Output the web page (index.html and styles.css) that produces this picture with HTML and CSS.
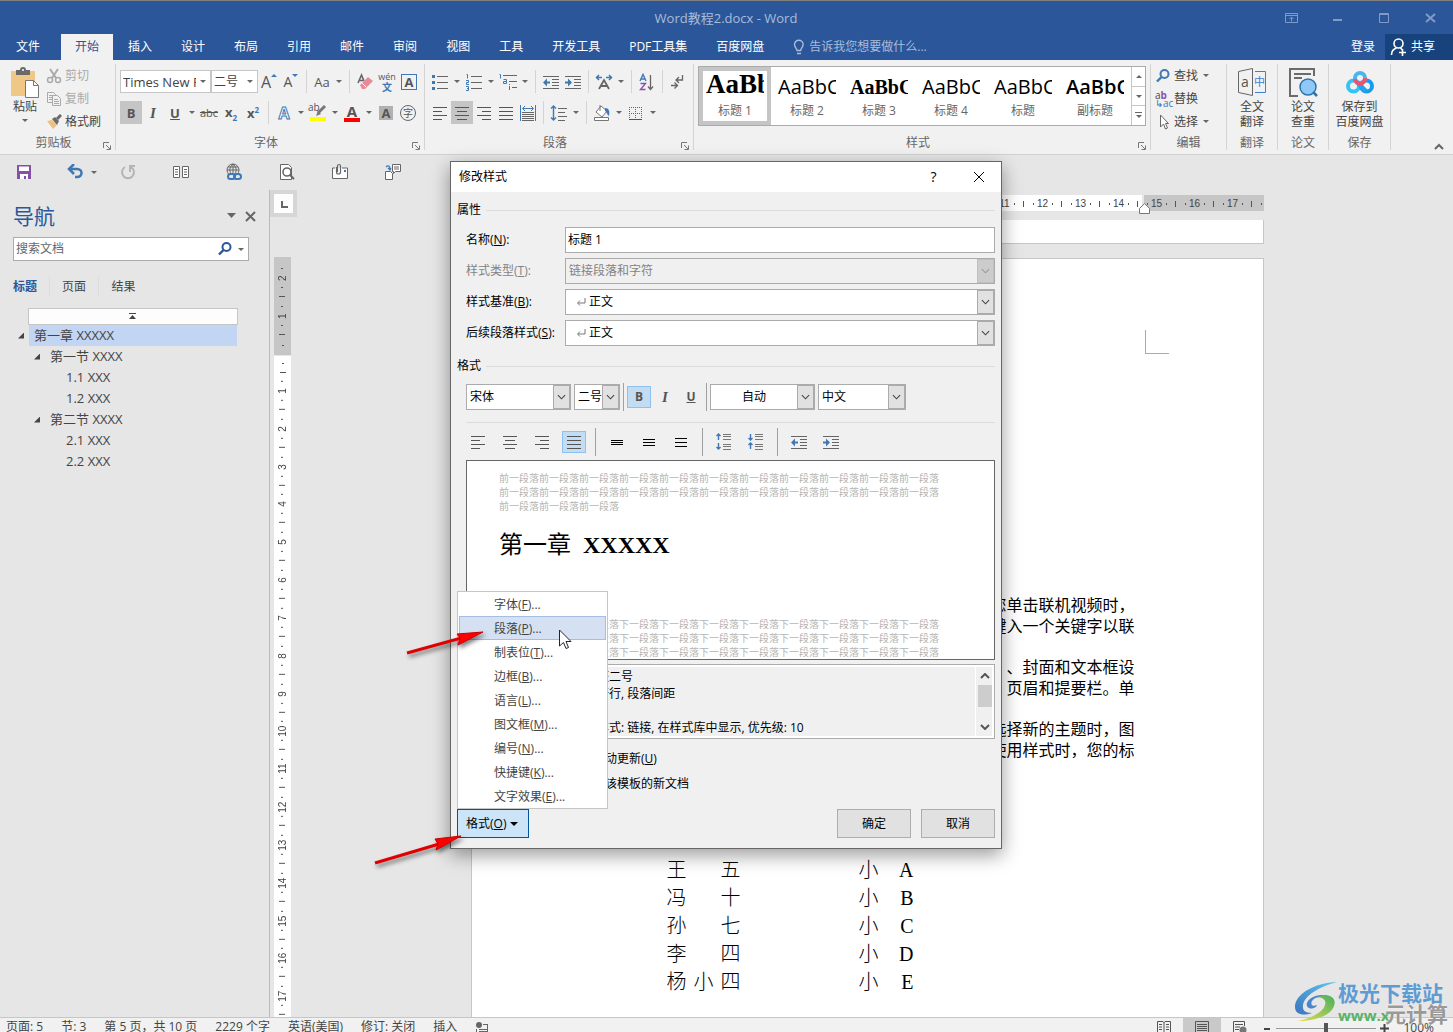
FILE: index.html
```html
<!DOCTYPE html>
<html lang="zh-CN">
<head>
  <title>Word教程2.docx - Word</title>
  <meta charset="UTF-8">
  <link rel="stylesheet" href="styles.css">
</head>
<body>
  <!-- Shared icons -->
  <svg class="sprite" aria-hidden="true">
    <symbol id="i-left" viewBox="0 0 20 20"><path d="M3 4.500h14M3 8.500h9M3 12.500h14M3 16.500h9" stroke="currentColor"/></symbol>
    <symbol id="i-center" viewBox="0 0 20 20"><path d="M3 4.500h14M5 8.500h10M3 12.500h14M5 16.500h10" stroke="currentColor"/></symbol>
    <symbol id="i-right" viewBox="0 0 20 20"><path d="M3 4.500h14M8 8.500h9M3 12.500h14M8 16.500h9" stroke="currentColor"/></symbol>
    <symbol id="i-justify" viewBox="0 0 20 20"><path d="M3 4.500h14M3 8.500h14M3 12.500h14M3 16.500h14" stroke="currentColor"/></symbol>
    <symbol id="i-outdent" viewBox="0 0 20 20"><path d="M2 4.500h16M11 7.500h7M11 10.500h7M11 13.500h7M2 16.500h16" stroke="#666"/><path d="M2 10.500l4-4v3h3v2H6v3z" fill="#3f78b5"/></symbol>
    <symbol id="i-indent" viewBox="0 0 20 20"><path d="M2 4.500h16M11 7.500h7M11 10.500h7M11 13.500h7M2 16.500h16" stroke="#666"/><path d="M9 10.500l-4-4v3H2v2h3v3z" fill="#3f78b5"/></symbol>
    <symbol id="i-chev" viewBox="0 0 10 6"><path d="M1 1l4 4 4-4" fill="none" stroke="currentColor" stroke-width="1.200"/></symbol>
    <symbol id="i-return" viewBox="0 0 10 8"><path d="M9 0v5H2M4 2.500L1.500 5 4 7.500" fill="none" stroke="#777"/></symbol>
    <symbol id="i-find" viewBox="0 0 16 16"><circle cx="9.500" cy="6" r="4" fill="none" stroke="currentColor" stroke-width="2"/><path d="M6.500 9L2 13.500" stroke="currentColor" stroke-width="2.400"/></symbol>
    <symbol id="i-launch" viewBox="0 0 8 8"><path d="M.5 6V.5H6M3 3l4 4M7.500 3.500v4h-4" fill="none" stroke="#777"/></symbol>
  </svg>

  <header class="titlebar">
    <h1>Word教程2.docx - Word</h1>
    <div class="window-controls">
      <button aria-label="功能区显示选项"><svg width="14" height="12"><path d="M.5 1.500h12v9H.5zM.5 3.500h12M6.500 9.500v-4M4.500 7l2-2 2 2" fill="none" stroke="currentColor"/></svg></button>
      <button aria-label="最小化"><svg width="10" height="12"><path d="M0 8h9" stroke="currentColor" stroke-width="2"/></svg></button>
      <button aria-label="最大化"><svg width="11" height="12"><path d="M.5 1.500h9v9h-9zM.5 2.500h9" fill="none" stroke="currentColor"/></svg></button>
      <button aria-label="关闭"><svg width="11" height="12"><path d="M1 2l9 8M10 2L1 10" stroke="currentColor" stroke-width="2"/></svg></button>
    </div>
  </header>

  <nav class="tabs">
    <button class="file">文件</button>
    <button class="active">开始</button>
    <button>插入</button>
    <button>设计</button>
    <button>布局</button>
    <button>引用</button>
    <button>邮件</button>
    <button>审阅</button>
    <button>视图</button>
    <button>工具</button>
    <button>开发工具</button>
    <button>PDF工具集</button>
    <button>百度网盘</button>
    <button class="tell-me"><svg width="12" height="16"><path d="M4 11.500c0-2-2.500-3-2.500-6a4.300 4.300 0 0 1 8.600 0c0 3-2.500 4-2.500 6zM4 14.500h4" fill="none" stroke="currentColor" stroke-width="1.400"/></svg>告诉我您想要做什么...</button>
    <button class="login">登录</button>
    <button class="share"><svg width="18" height="18"><circle cx="8.500" cy="5.500" r="4.500" fill="none" stroke="#fff" stroke-width="1.600"/><path d="M1.500 17c0-4 2-6 5-7M10.500 10l2 2M9 14.500h7M12.500 11v7" fill="none" stroke="#fff" stroke-width="1.600"/></svg>共享</button>
  </nav>

  <section class="ribbon">
    <div class="group">
      <div class="group-body clipboard">
        <button class="big-button">
          <svg width="30" height="32"><path d="M1 4h24v25H1z" fill="#eec884"/><path d="M6 3h4a3 3 0 0 1 6 0h4v5H6z" fill="#6a6a6a"/><circle cx="13" cy="3" r="1" fill="#fff"/><path d="M15.500 13.500h8l5 5v12h-13z" fill="#fff" stroke="#777"/><path d="M23.500 13.500v5h5" fill="none" stroke="#777"/></svg>
          <span>粘贴</span><i class="caret"></i>
        </button>
        <div class="stack">
          <button class="row-button disabled"><svg width="16" height="16"><path d="M4 1l6 9M12 1L6 10" stroke="#aaa" stroke-width="2"/><circle cx="4" cy="12" r="2.500" fill="none" stroke="#aaa" stroke-width="1.500"/><circle cx="12" cy="12" r="2.500" fill="none" stroke="#aaa" stroke-width="1.500"/></svg>剪切</button>
          <button class="row-button disabled"><svg width="16" height="16"><path d="M1.500 1.500h6l2 2v8h-8zM3 4.500h4M3 6.500h3M3 8.500h3" fill="#f1f1f1" stroke="#aaa"/><path d="M6.500 4.500h5l3 3v7h-8zM8 8.500h4M8 10.500h5M8 12.500h5" fill="#f1f1f1" stroke="#aaa"/></svg>复制</button>
          <button class="row-button"><svg width="16" height="16"><path d="M1 7l5-1 5 5-4 4z" fill="#eec07a"/><path d="M6 5l3-2 4 4-2 4z" fill="#6a6a6a"/><path d="M11 5l4-4" stroke="#6a6a6a" stroke-width="3"/></svg>格式刷</button>
        </div>
      </div>
      <div class="group-label">剪贴板<svg class="launcher" width="8" height="8"><use href="#i-launch"/></svg></div>
    </div>

    <div class="group">
      <div class="group-body tool-rows">
        <div class="tool-row">
          <label class="ribbon-combo font-name"><input type="text" value="Times New Roman" aria-label="字体"><i class="caret"></i></label>
          <label class="ribbon-combo font-size"><input type="text" value="二号" aria-label="字号"><i class="caret"></i></label>
          <button class="tool"><span class="glyph">A</span><sup class="tri-up"></sup></button>
          <button class="tool"><span class="glyph small">A</span><sup class="tri-down"></sup></button>
          <span class="sep"></span>
          <button class="tool">Aa</button><button class="drop" aria-label="更改大小写选项"></button>
          <span class="sep"></span>
          <button class="tool" aria-label="清除格式"><svg width="20" height="20"><path d="M3 11L6.500 3 9 9M4 8.500h4" fill="none" stroke="#666" stroke-width="1.600"/><path d="M5 13l8-8 5 4-8 8H7z" fill="#e88b99"/><path d="M7 11l4 4" stroke="#fff"/></svg></button>
          <button class="tool pinyin"><small>wén</small><b>文</b></button>
          <button class="tool"><span class="boxed">A</span></button>
        </div>
        <div class="tool-row">
          <button class="tool on"><b>B</b></button>
          <button class="tool"><i class="serif">I</i></button>
          <button class="tool"><u><b>U</b></u></button><button class="drop" aria-label="下划线选项"></button>
          <button class="tool strike"><s>abc</s></button>
          <button class="tool"><b>x<sub>2</sub></b></button>
          <button class="tool"><b>x<sup>2</sup></b></button>
          <span class="sep"></span>
          <button class="tool"><span class="outline">A</span></button><button class="drop" aria-label="文本效果选项"></button>
          <button class="tool marker"><small>ab</small><svg width="20" height="20"><path d="M17 3l-7 7" stroke="#777" stroke-width="3"/><path d="M10 8l3 3-5 2z" fill="#777"/><path d="M2 14h16v4H2z" fill="#ff0"/></svg></button><button class="drop" aria-label="突出显示选项"></button>
          <button class="tool"><span class="font-color">A</span></button><button class="drop" aria-label="字体颜色选项"></button>
          <button class="tool"><span class="shaded">A</span></button>
          <button class="tool"><span class="circled">字</span></button>
        </div>
      </div>
      <div class="group-label">字体<svg class="launcher" width="8" height="8"><use href="#i-launch"/></svg></div>
    </div>

    <div class="group">
      <div class="group-body tool-rows">
        <div class="tool-row">
          <button class="tool" aria-label="项目符号"><svg width="20" height="20"><path d="M7 4.500h11M7 10.500h11M7 16.500h11" stroke="#666"/><path d="M2 3h3v3H2zM2 9h3v3H2zM2 15h3v3H2z" fill="#3f78b5"/></svg></button><button class="drop" aria-label="项目符号选项"></button>
          <button class="tool" aria-label="编号"><svg width="20" height="20"><path d="M7 4.500h11M7 10.500h11M7 16.500h11" stroke="#666"/><path d="M2.500 2.500h1v4M2 8.500h2.500v2h-2v2H5M2 14.500h2.500v4H2M3 16.500h1.500" fill="none" stroke="#3f78b5"/></svg></button><button class="drop" aria-label="编号选项"></button>
          <button class="tool" aria-label="多级列表"><svg width="20" height="20"><path d="M5 3.500h14M11 9.500h8M14 15.500h5" stroke="#666"/><path d="M1.500 2.500h1v4M5.500 7.500h3v4h-3v-2h3M11.500 14v4M11.500 12v1" fill="none" stroke="#3f78b5"/></svg></button><button class="drop" aria-label="多级列表选项"></button>
          <span class="sep"></span>
          <button class="tool" aria-label="减少缩进量"><svg width="20" height="20"><use href="#i-outdent"/></svg></button>
          <button class="tool" aria-label="增加缩进量"><svg width="20" height="20"><use href="#i-indent"/></svg></button>
          <span class="sep"></span>
          <button class="tool" aria-label="中文版式"><svg width="20" height="20"><path d="M5 17l5-9 5 9M7 14h6" fill="none" stroke="#666" stroke-width="1.800"/><path d="M2 5.500h6M5 3L2.500 5.500 5 8M12 5.500h6M15 3l2.500 2.500L15 8" fill="none" stroke="#3f78b5" stroke-width="1.500"/></svg></button><button class="drop" aria-label="中文版式选项"></button>
          <span class="sep"></span>
          <button class="tool" aria-label="排序"><svg width="20" height="20"><path d="M3 9l3-6.500L9 9M4 7h4" fill="none" stroke="#3f78b5" stroke-width="1.400"/><path d="M3.500 11.500h5l-5 6h5" fill="none" stroke="#8f4fb0" stroke-width="1.400"/><path d="M13.500 3v14M11 14.500l2.500 3 2.500-3" fill="none" stroke="#666" stroke-width="1.300"/></svg></button>
          <span class="sep"></span>
          <button class="tool" aria-label="显示编辑标记"><svg width="20" height="20"><path d="M14.500 3v5h-6M11 5L8 8l3 3M3 13.500h6M6.500 10.500l3 3-3 3" fill="none" stroke="#666" stroke-width="1.300"/></svg></button>
        </div>
        <div class="tool-row">
          <button class="tool" aria-label="左对齐"><svg width="20" height="20"><use href="#i-left"/></svg></button>
          <button class="tool on" aria-label="居中"><svg width="20" height="20"><use href="#i-center"/></svg></button>
          <button class="tool" aria-label="右对齐"><svg width="20" height="20"><use href="#i-right"/></svg></button>
          <button class="tool" aria-label="两端对齐"><svg width="20" height="20"><use href="#i-justify"/></svg></button>
          <button class="tool" aria-label="分散对齐"><svg width="20" height="20"><path d="M2.500 2v16M17.500 2v16M5 5.500h10M7 3L4.500 5.500 7 8M13 3l2.500 2.500L13 8" fill="none" stroke="#3f78b5"/><path d="M4 9.500h12M4 11.500h12M4 13.500h12M4 15.500h12M4 17.500h12" stroke="#666"/></svg></button>
          <span class="sep"></span>
          <button class="tool" aria-label="行和段落间距"><svg width="20" height="20"><path d="M9 5.500h9M9 9.500h7M9 13.500h9M9 17.500h7" stroke="#666"/><path d="M4.500 3v14M2 5.500L4.500 3 7 5.500M2 14.500L4.500 17 7 14.500" fill="none" stroke="#3f78b5" stroke-width="1.400"/></svg></button><button class="drop" aria-label="间距选项"></button>
          <span class="sep"></span>
          <button class="tool" aria-label="底纹"><svg width="20" height="20"><path d="M4 9l5-6 6 5-5 6z" fill="#fff" stroke="#777"/><path d="M8 2v6" stroke="#777"/><path d="M13 5c4 0 5 3 4 8-2-1-2-4-4-5z" fill="#3f78b5"/><path d="M2.500 14.500h14v3h-14z" fill="#fff" stroke="#777"/></svg></button><button class="drop" aria-label="底纹选项"></button>
          <button class="tool" aria-label="边框"><svg width="20" height="20"><path d="M3 4.500h13M3 10.500h13M3.500 4v12M9.500 4v12M15.500 4v12" stroke="#666" stroke-dasharray="1 1"/><path d="M3 16.500h13" stroke="#555"/></svg></button><button class="drop" aria-label="边框选项"></button>
        </div>
      </div>
      <div class="group-label">段落<svg class="launcher" width="8" height="8"><use href="#i-launch"/></svg></div>
    </div>

    <div class="group styles-group">
      <div class="group-body">
        <div class="gallery">
          <button class="style-item selected"><span class="sample h1">AaBbC</span>标题 1</button>
          <button class="style-item"><span class="sample">AaBbC</span>标题 2</button>
          <button class="style-item"><span class="sample h3">AaBbC</span>标题 3</button>
          <button class="style-item"><span class="sample h4">AaBbC</span>标题 4</button>
          <button class="style-item"><span class="sample">AaBbC</span>标题</button>
          <button class="style-item"><span class="sample sub">AaBbC</span>副标题</button>
          <div class="gallery-scroll">
            <button aria-label="上一行"><i class="caret up"></i></button>
            <button aria-label="下一行"><i class="caret"></i></button>
            <button aria-label="其他"><svg width="8" height="7"><path d="M0 .5h7" stroke="#666"/><path d="M1 3h6L4 6z" fill="#666"/></svg></button>
          </div>
        </div>
      </div>
      <div class="group-label">样式<svg class="launcher" width="8" height="8"><use href="#i-launch"/></svg></div>
    </div>

    <div class="group">
      <div class="group-body stack edit">
        <button class="row-button find"><svg width="16" height="16"><use href="#i-find"/></svg>查找<i class="caret"></i></button>
        <button class="row-button"><span class="replace-icon"><span>a<b>b</b></span><em>↳ac</em></span>替换</button>
        <button class="row-button"><svg width="16" height="16"><path d="M5.500 1v12l3-3 2 5 2-1-2-4.500h3z" fill="#fff" stroke="#666"/></svg>选择<i class="caret"></i></button>
      </div>
      <div class="group-label">编辑</div>
    </div>

    <div class="group">
      <div class="group-body">
        <button class="big-button">
          <svg width="30" height="32"><path d="M1.500 4.500l14-3v27l-14-3z" fill="none" stroke="#666"/><path d="M18 4.500h10.500v21H18" fill="none" stroke="#3f7fd5"/><text x="4" y="20" font-size="14" fill="#555">a</text><text x="17" y="19" font-size="11" fill="#3f7fd5">中</text></svg>
          <span>全文<br>翻译</span>
        </button>
      </div>
      <div class="group-label">翻译</div>
    </div>
    <div class="group">
      <div class="group-body">
        <button class="big-button">
          <svg width="30" height="32"><path d="M26 9V2H2v27h8" fill="none" stroke="#6b6b6b" stroke-width="2"/><path d="M6 7h17M6 11h8" stroke="#6b6b6b" stroke-width="2"/><circle cx="20" cy="20" r="8" fill="#8fc7f7" stroke="#2d75a8" stroke-width="1.500"/><path d="M25 25l4 4" stroke="#2d75a8" stroke-width="2.500"/></svg>
          <span>论文<br>查重</span>
        </button>
      </div>
      <div class="group-label">论文</div>
    </div>
    <div class="group">
      <div class="group-body">
        <button class="big-button wide">
          <svg width="30" height="32"><circle cx="8.500" cy="19" r="5.500" fill="none" stroke="#35c3f5" stroke-width="4"/><circle cx="21.500" cy="19" r="5.500" fill="none" stroke="#159bf0" stroke-width="4"/><path d="M12 15l9 9" stroke="#1fa6f3" stroke-width="4"/><circle cx="15" cy="11" r="5" fill="none" stroke="#48b5f0" stroke-width="4"/><path d="M20 11a5 5 0 0 1-10 1" fill="none" stroke="#f4516c" stroke-width="4"/></svg>
          <span>保存到<br>百度网盘</span>
        </button>
      </div>
      <div class="group-label">保存</div>
    </div>
    <button class="collapse" aria-label="折叠功能区"><svg width="10" height="7"><path d="M1 6l4-4 4 4" fill="none" stroke="#666" stroke-width="2"/></svg></button>
  </section>

  <div class="quick-access">
    <button aria-label="保存"><svg width="16" height="16"><path d="M1 1h14v14H1z" fill="#8650a8"/><path d="M3 2.500h10V7H3zM4 10h8v5h-2v-3H8v3H4z" fill="#fff"/></svg></button>
    <button class="undo" aria-label="撤消"><svg width="18" height="16"><path d="M3 5h7c6 0 6 8 0 8H8M7 0L2 5l5 5" fill="none" stroke="#3f78b5" stroke-width="2.500"/></svg><i class="caret"></i></button>
    <button aria-label="恢复"><svg width="16" height="16"><path d="M5 3a6 6 0 1 0 6 0M10 8V2h5" fill="none" stroke="#b5b5b5" stroke-width="2"/></svg></button>
    <button aria-label="双页"><svg width="18" height="14"><path d="M1.500 1.500h6v11h-6zM10.500 1.500h6v11h-6zM3 4.500h3M3 7h3M3 9.500h3M12 4.500h3M12 7h3M12 9.500h3" fill="#fff" stroke="#666"/></svg></button>
    <button aria-label="超链接"><svg width="18" height="18"><circle cx="8" cy="7" r="6" fill="none" stroke="#666"/><path d="M2 7h12M3 4h10M8 1v9M8 1c-4 3-4 8-1 11M8 1c4 3 4 8 1 11" fill="none" stroke="#666"/><rect x="3" y="11" width="7" height="5" rx="2.500" fill="#e6e6e6" stroke="#3f78b5" stroke-width="2"/><rect x="9" y="11" width="7" height="5" rx="2.500" fill="none" stroke="#3f78b5" stroke-width="2"/></svg></button>
    <button aria-label="打印预览"><svg width="16" height="18"><path d="M1.500 1.500h8l3 3v12h-11z" fill="#fff" stroke="#666"/><circle cx="8" cy="9" r="4" fill="#fff" stroke="#666" stroke-width="1.600"/><path d="M11 12l4 4" stroke="#666" stroke-width="2"/></svg></button>
    <button aria-label="附件"><svg width="18" height="18"><path d="M4 5H1.500v10.500h15V5H11" fill="#fff" stroke="#666"/><path d="M5.500 4v5a2 2 0 0 0 4 0V3a1.500 1.500 0 0 0-3 0v6" fill="none" stroke="#666" stroke-width="1.200"/><path d="M13 7h2v2h-2z" fill="#3f78b5"/></svg></button>
    <button aria-label="发送"><svg width="18" height="18"><path d="M8.500 1.500h8v7h-5l-2 2v-2h-1zM10 4h5M10 6h5" fill="#fff" stroke="#666"/><path d="M1.500 8.500h5l2 2v6h-7z" fill="#fff" stroke="#666"/><path d="M2 4c2-2 4-1 4 2M4 5l2 2 1-2" fill="none" stroke="#3f78b5" stroke-width="1.200"/></svg></button>
  </div>

  <main class="workspace">
    <aside class="nav-pane">
      <div class="nav-head">
        <h2>导航</h2>
        <button aria-label="任务窗格选项"><svg width="10" height="6"><path d="M0 0h9L4.500 5z" fill="#666"/></svg></button>
        <button aria-label="关闭导航"><svg width="11" height="11"><path d="M1 1l9 9M10 1L1 10" stroke="#666" stroke-width="2"/></svg></button>
      </div>
      <div class="nav-search">
        <input type="text" placeholder="搜索文档" aria-label="搜索文档">
        <svg width="16" height="16"><use href="#i-find"/></svg><i class="caret"></i>
      </div>
      <div class="nav-tabs">
        <button class="active">标题</button>
        <button>页面</button>
        <button>结果</button>
      </div>
      <button class="nav-top" aria-label="跳到开头"><svg width="8" height="7"><path d="M0 .5h7" stroke="#444"/><path d="M3.500 2L7 6H0z" fill="#444"/></svg></button>
      <ul class="tree">
        <li class="selected"><i class="twisty"></i><a href="#">第一章 XXXXX</a></li>
        <li class="level-2"><i class="twisty"></i><a href="#">第一节 XXXX</a></li>
        <li class="level-3"><a href="#">1.1 XXX</a></li>
        <li class="level-3"><a href="#">1.2 XXX</a></li>
        <li class="level-2"><i class="twisty"></i><a href="#">第二节 XXXX</a></li>
        <li class="level-3"><a href="#">2.1 XXX</a></li>
        <li class="level-3"><a href="#">2.2 XXX</a></li>
      </ul>
    </aside>

    <div class="v-side">
      <button class="tab-stop" aria-label="制表符"><svg width="20" height="20"><path d="M8 7v6h6" fill="none" stroke="#666" stroke-width="2"/></svg></button>
      <div class="v-ruler">
        <ol class="margin"><li>2</li><li>1</li></ol>
        <ol class="area">
          <li>1</li><li>2</li><li>3</li><li>4</li><li>5</li><li>6</li><li>7</li><li>8</li><li>9</li>
          <li>10</li><li>11</li><li>12</li><li>13</li><li>14</li><li>15</li><li>16</li><li>17</li>
        </ol>
      </div>
    </div>

    <div class="pages">
      <div class="h-ruler">
        <ol class="area"><li>11</li><li>12</li><li>13</li><li>14</li></ol>
        <ol class="margin"><li>15</li><li>16</li><li>17</li><li class="end"></li></ol>
        <svg class="indent-marker" width="12" height="11"><path d="M.5 10.500v-5l5-5 5 5v5z" fill="#fff" stroke="#777"/></svg>
      </div>
      <div class="page-end"></div>
      <article class="page">
        <div class="crop-mark"></div>
        <div class="body-text">
          <p>您单击联机视频时，<br>键入一个关键字以联</p>
          <p>、封面和文本框设<br>页眉和提要栏。单</p>
          <p>选择新的主题时，图<br>使用样式时，您的标</p>
        </div>
        <table class="names">
          <tr><td>王 五</td><td>小 A</td></tr>
          <tr><td>冯 十</td><td>小 B</td></tr>
          <tr><td>孙 七</td><td>小 C</td></tr>
          <tr><td>李 四</td><td>小 D</td></tr>
          <tr><td>杨 小 四</td><td>小 E</td></tr>
        </table>
      </article>
    </div>
  </main>

  <footer class="statusbar">
    <span>页面: 5</span>
    <span>节: 3</span>
    <span>第 5 页，共 10 页</span>
    <span>2229 个字</span>
    <span>英语(美国)</span>
    <span>修订: 关闭</span>
    <span>插入</span>
    <svg width="14" height="14"><circle cx="4" cy="4" r="3" fill="#666"/><path d="M8 3.500h5M1.500 8v6M4 8.500h9M4 10.500h9M4 12.500h9M12.500 4v10" stroke="#666"/></svg>
    <div class="views">
      <button aria-label="阅读视图"><svg width="14" height="14"><path d="M.5 1.500h5.500l1 1 1-1h5.500v11H.5zM7 2v11M2 4.500h3M2 7h3M2 9.500h3M9 4.500h3M9 7h3M9 9.500h3" fill="none" stroke="#555"/></svg></button>
      <button class="on" aria-label="页面视图"><svg width="14" height="14"><path d="M.5 1.500h13v12H.5zM2 4.500h10M2 6.500h10M2 8.500h10M2 10.500h10" fill="none" stroke="#555"/></svg></button>
      <button aria-label="Web 版式视图"><svg width="14" height="14"><path d="M6 12.500H.5v-11h11V6M2 4.500h8M2 7h5M2 9.500h4" fill="none" stroke="#555"/><circle cx="10" cy="10" r="3.500" fill="#777"/></svg></button>
    </div>
    <div class="zoom">
      <button aria-label="缩小"><svg width="9" height="9"><path d="M1 5h6" stroke="#444" stroke-width="2"/></svg></button>
      <input type="range" value="50" aria-label="显示比例">
      <button aria-label="放大"><svg width="9" height="9"><path d="M0 4.500h9M4.500 0v9" stroke="#444" stroke-width="2"/></svg></button>
      <span>100%</span>
    </div>
  </footer>

  <!-- Modify style dialog -->
  <div class="dialog-layer">
    <div class="dialog" role="dialog" aria-labelledby="dialogTitle">
      <div class="dialog-title">
        <h2 id="dialogTitle">修改样式</h2>
        <button aria-label="帮助">?</button>
        <button aria-label="关闭对话框"><svg width="12" height="12"><path d="M1 1l10 10M11 1L1 11" stroke="#000"/></svg></button>
      </div>

      <form class="dialog-body">
        <h3>属性</h3>
        <div class="fields">
          <label for="styleName">名称(<u>N</u>):</label>
          <input id="styleName" class="name-input" type="text" value="标题 1">
          <label for="styleType" class="disabled">样式类型(<u>T</u>):</label>
          <div class="combo disabled"><select id="styleType" disabled><option>链接段落和字符</option></select><svg><use href="#i-chev"/></svg></div>
          <label for="styleBase">样式基准(<u>B</u>):</label>
          <div class="combo"><svg class="return" width="10" height="8"><use href="#i-return"/></svg><select id="styleBase"><option>正文</option></select><svg><use href="#i-chev"/></svg></div>
          <label for="styleNext">后续段落样式(<u>S</u>):</label>
          <div class="combo"><svg class="return" width="10" height="8"><use href="#i-return"/></svg><select id="styleNext"><option>正文</option></select><svg><use href="#i-chev"/></svg></div>
        </div>

        <h3>格式</h3>
        <div class="format-row">
          <div class="combo font"><select aria-label="字体"><option>宋体</option></select><svg><use href="#i-chev"/></svg></div>
          <div class="combo size"><select aria-label="字号"><option>二号</option></select><svg><use href="#i-chev"/></svg></div>
          <span class="bar"></span>
          <button type="button" class="fmt on"><b>B</b></button>
          <button type="button" class="fmt"><i class="serif">I</i></button>
          <button type="button" class="fmt"><b><u>U</u></b></button>
          <span class="bar"></span>
          <div class="combo color"><select aria-label="字体颜色"><option>自动</option></select><svg><use href="#i-chev"/></svg></div>
          <div class="combo script"><select aria-label="文字"><option>中文</option></select><svg><use href="#i-chev"/></svg></div>
        </div>
        <div class="align-row">
          <button type="button" class="fmt" aria-label="左对齐"><svg width="20" height="20"><use href="#i-left"/></svg></button>
          <button type="button" class="fmt" aria-label="居中"><svg width="20" height="20"><use href="#i-center"/></svg></button>
          <button type="button" class="fmt" aria-label="右对齐"><svg width="20" height="20"><use href="#i-right"/></svg></button>
          <button type="button" class="fmt on" aria-label="两端对齐"><svg width="20" height="20"><use href="#i-justify"/></svg></button>
          <span class="bar"></span>
          <button type="button" class="fmt" aria-label="单倍行距"><svg width="20" height="20"><path d="M4 8.500h12M4 10.500h12M4 12.500h12" stroke="#000"/></svg></button>
          <button type="button" class="fmt" aria-label="1.5 倍行距"><svg width="20" height="20"><path d="M4 7.500h12M4 10.500h12M4 13.500h12" stroke="#000"/></svg></button>
          <button type="button" class="fmt" aria-label="2 倍行距"><svg width="20" height="20"><path d="M4 6.500h12M4 10.500h12M4 14.500h12" stroke="#000"/></svg></button>
          <span class="bar"></span>
          <button type="button" class="fmt" aria-label="增加段落间距"><svg width="20" height="20"><path d="M9 2.500h8M9 4.500h8M9 7.500h8M9 12.500h8M9 14.500h8M9 17.500h8" stroke="#777"/><path d="M4.500 2v6M2.500 4l2-2 2 2M4.500 11v6M2.500 15l2 2 2-2" fill="none" stroke="#3f78b5" stroke-width="1.400"/></svg></button>
          <button type="button" class="fmt" aria-label="减少段落间距"><svg width="20" height="20"><path d="M9 2.500h8M9 4.500h8M9 7.500h8M9 12.500h8M9 14.500h8M9 17.500h8" stroke="#777"/><path d="M4.500 2v6M2.500 6l2 2 2-2M4.500 11v6M2.500 13l2-2 2 2" fill="none" stroke="#3f78b5" stroke-width="1.400"/></svg></button>
          <span class="bar"></span>
          <button type="button" class="fmt" aria-label="减少缩进量"><svg width="20" height="20"><use href="#i-outdent"/></svg></button>
          <button type="button" class="fmt" aria-label="增加缩进量"><svg width="20" height="20"><use href="#i-indent"/></svg></button>
        </div>

        <div class="preview">
          <p>前一段落前一段落前一段落前一段落前一段落前一段落前一段落前一段落前一段落前一段落前一段落前一段落前一段落前一段落前一段落前一段落前一段落前一段落前一段落前一段落前一段落前一段落前一段落前一段落前一段落</p>
          <div class="preview-heading">第一章&ensp;<b>XXXXX</b></div>
          <p>下一段落下一段落下一段落下一段落下一段落下一段落下一段落下一段落下一段落下一段落下一段落下一段落下一段落下一段落下一段落下一段落下一段落下一段落下一段落下一段落下一段落下一段落下一段落下一段落下一段落下一段落下一段落下一段落下一段落下一段落下一段落下一段落下一段落</p>
        </div>

        <div class="description">
          <div class="description-text">整二号<br>倍行, 段落间距<br><br>样式: 链接, 在样式库中显示, 优先级: 10</div>
          <div class="scrollbar">
            <svg width="10" height="6"><path d="M1 5l4-4 4 4" fill="none" stroke="#555" stroke-width="2"/></svg>
            <span class="thumb"></span>
            <svg width="10" height="6"><path d="M1 1l4 4 4-4" fill="none" stroke="#555" stroke-width="2"/></svg>
          </div>
        </div>

        <div class="options">
          <label><input type="checkbox"><span>自动更新(<u>U</u>)</span></label>
          <label><input type="radio"><span>于该模板的新文档</span></label>
        </div>

        <div class="dialog-buttons">
          <div class="format-menu-wrap">
            <button type="button" class="format-button"><span>格式(<u>O</u>)</span><i class="caret"></i></button>
            <div class="menu" role="menu">
              <button type="button" role="menuitem">字体(<u>F</u>)...</button>
              <button type="button" role="menuitem" class="hover">段落(<u>P</u>)...</button>
              <button type="button" role="menuitem">制表位(<u>T</u>)...</button>
              <button type="button" role="menuitem">边框(<u>B</u>)...</button>
              <button type="button" role="menuitem">语言(<u>L</u>)...</button>
              <button type="button" role="menuitem">图文框(<u>M</u>)...</button>
              <button type="button" role="menuitem">编号(<u>N</u>)...</button>
              <button type="button" role="menuitem">快捷键(<u>K</u>)...</button>
              <button type="button" role="menuitem">文字效果(<u>E</u>)...</button>
            </div>
            <svg class="pointer" width="14" height="21"><path d="M1.500 1v16l4-3.500 2.500 6 2.500-1-2.500-6h5z" fill="#fff" stroke="#223"/></svg>
            <svg class="arrow arrow-item" width="84" height="34"><path d="M2 25L60 9" stroke="#e00000" stroke-width="3"/><path d="M78 4L52 6l3 4-2 7z" fill="#f00" stroke="#c60000"/></svg>
            <svg class="arrow arrow-button" width="94" height="38"><path d="M2 29L66 10" stroke="#e00000" stroke-width="3"/><path d="M88 2L62 5l3 5-2 6z" fill="#f00" stroke="#c60000"/></svg>
          </div>
          <button type="button" class="plain">确定</button>
          <button type="button" class="plain">取消</button>
        </div>
      </form>
    </div>
  </div>

  <!-- Site marks -->
  <div class="watermark">
    <svg width="44" height="44" viewBox="0 0 44 44"><defs><linearGradient id="swirlBlue" x1="1" y1="0" x2="0" y2="1"><stop offset="0" stop-color="#5ec8ec"/><stop offset="1" stop-color="#3d74c0"/></linearGradient><linearGradient id="swirlGreen" x1="0" y1="1" x2="1" y2="0"><stop offset="0" stop-color="#e8dc50"/><stop offset="1" stop-color="#45b060"/></linearGradient></defs><path d="M43 2C20 3 1 14 1 27c0 8 9 9 17 6-7 0-10-3-9-8C11 15 25 7 43 2z" fill="url(#swirlBlue)"/><path d="M20 18c9-6 24-3 20 8-3 9-18 15-36 15 14-3 25-9 27-16 2-6-4-9-11-7z" fill="url(#swirlGreen)"/><path d="M31 15c-12-1-20 6-18 11 2 4 9 3 10-1-4 2-7 0-5-4 2-3 7-5 13-6z" fill="#4b86cc"/></svg>
    <div class="watermark-text"><strong>极光下载站</strong><span>www.x</span></div>
    <b class="watermark-over">元计算</b>
  </div>
</body>
</html>
```

FILE: styles.css
```css
* {
  margin: 0;
  padding: 0;
  box-sizing: border-box;
}

body {
  font-family: "Open Sans", "Noto Sans CJK SC", sans-serif;
  font-size: 12px;
  line-height: 16px;
  color: #444;
  background: #e6e6e6;
  height: 100vh;
  display: flex;
  flex-direction: column;
  position: relative;
  overflow: hidden;
}

button, input, select {
  font: inherit;
  color: inherit;
  background: none;
  border: none;
  outline: none;
}

button {
  white-space: nowrap;
}

ul, ol {
  list-style: none;
}

h1, h2, h3 {
  font-weight: normal;
}

svg {
  display: block;
  flex-shrink: 0;
}

.sprite {
  position: absolute;
  width: 0;
  height: 0;
}

.caret {
  display: block;
  width: 0;
  height: 0;
  flex-shrink: 0;
  border: 3px solid transparent;
  border-top-color: #666;
  border-bottom: none;
}

.caret.up {
  border-top: none;
  border-bottom: 3px solid #666;
}

.serif {
  font-family: "Liberation Serif", serif;
  font-weight: bold;
  font-size: 15px;
}

/* Title bar */
.titlebar {
  height: 34px;
  flex-shrink: 0;
  background: #2b579a;
  border-top: 1px solid #7f7f7f;
  color: #a9bcd9;
  display: flex;
  align-items: center;
  padding-left: 183px;
}

.titlebar h1 {
  flex: 1;
  text-align: center;
  font-size: 13px;
}

.window-controls {
  display: flex;
  color: #7f9bc6;
}

.window-controls button {
  width: 46px;
  height: 32px;
  display: flex;
  align-items: center;
  justify-content: center;
}

/* Tabs */
.tabs {
  height: 26px;
  flex-shrink: 0;
  display: flex;
  gap: 1px;
  background: #2b579a;
  color: #fff;
}

.tabs button {
  padding: 0 14px;
  line-height: 24px;
}

.tabs .file {
  padding: 0 20px 0 16px;
}

.tabs .active {
  background: #f1f1f1;
  color: #2b579a;
}

.tabs .tell-me {
  display: flex;
  align-items: center;
  gap: 4px;
  color: #a9bcd9;
}

.tabs .login {
  margin-left: auto;
  padding: 0 9px;
}

.tabs .share {
  display: flex;
  align-items: center;
  gap: 3px;
  background: #17427c;
  padding: 0 18px 0 5px;
}

/* Ribbon */
.ribbon {
  height: 95px;
  flex-shrink: 0;
  display: flex;
  background: #f1f1f1;
  border-bottom: 1px solid #d2d2d2;
}

.group {
  display: flex;
  flex-direction: column;
  margin: 4px 0;
  padding: 0 4px;
  border-right: 1px solid #d4d4d4;
}

.group-body {
  height: 72px;
  display: flex;
}

.group-label {
  display: flex;
  align-items: center;
  justify-content: center;
  line-height: 14px;
  color: #666;
}

.group-label::before,
.group-label::after {
  content: "";
  flex: 1;
}

.group-label .launcher {
  order: 2;
  margin-top: 5px;
}

.styles-group {
  flex: 1;
  min-width: 0;
}

.collapse {
  width: 62px;
  display: flex;
  align-items: flex-end;
  justify-content: flex-end;
  padding: 0 9px 4px 0;
}

.big-button {
  display: flex;
  flex-direction: column;
  align-items: center;
  width: 42px;
  padding-top: 3px;
  line-height: 15px;
}

.big-button.wide {
  width: 53px;
}

.big-button .caret {
  margin-top: 5px;
}

.clipboard {
  width: 107px;
}

.stack {
  display: flex;
  flex-direction: column;
}

.row-button {
  height: 23px;
  display: flex;
  align-items: center;
  gap: 3px;
}

.row-button .caret {
  margin-left: 2px;
}

.row-button.find svg {
  color: #3f78b5;
}

.row-button.disabled {
  color: #aaa;
}

.edit {
  width: 67px;
}

.replace-icon {
  width: 16px;
  font-size: 10px;
  line-height: 8px;
  text-align: left;
}

.replace-icon b {
  color: #8f4fb0;
}

.replace-icon em {
  display: block;
  font-style: normal;
  color: #3f78b5;
}

.tool-rows {
  flex-direction: column;
  gap: 8px;
  padding-top: 6px;
}

.tool-row {
  height: 23px;
  display: flex;
}

.tool {
  width: 22px;
  display: flex;
  align-items: center;
  justify-content: center;
  color: #555;
  font-size: 13px;
}

.tool.on {
  background: #c5c5c5;
}

.drop {
  width: 12px;
  display: flex;
  align-items: center;
  justify-content: center;
}

.drop::before {
  content: "";
  border: 3px solid transparent;
  border-top-color: #666;
  border-bottom: none;
}

.sep {
  width: 1px;
  margin: 0 4px;
  background: #d4d4d4;
}

.tool .glyph {
  font-size: 16px;
}

.tool .glyph.small {
  font-size: 14px;
}

.tri-up,
.tri-down {
  align-self: flex-start;
  margin-top: 4px;
  border: 3px solid transparent;
}

.tri-up {
  border-bottom-color: #3f78b5;
  border-top: none;
}

.tri-down {
  border-top-color: #3f78b5;
  border-bottom: none;
}

.tool b sub,
.tool b sup {
  font-size: 8px;
  line-height: 8px;
  color: #3f78b5;
}

.tool.strike {
  font-size: 11px;
}

.tool.pinyin {
  flex-direction: column;
  line-height: 10px;
}

.tool.pinyin small {
  font-size: 9px;
}

.tool.pinyin b {
  font-size: 10px;
  color: #3f78b5;
}

.boxed {
  width: 16px;
  height: 16px;
  line-height: 14px;
  border: 1px solid #3f78b5;
  font-weight: bold;
}

.outline {
  font-size: 16px;
  font-weight: bold;
  color: #fff;
  -webkit-text-stroke: 1px #3f78b5;
}

.marker {
  display: grid;
}

.marker small,
.marker svg {
  grid-area: 1 / 1;
}

.marker small {
  font-size: 10px;
  line-height: 12px;
  align-self: start;
  justify-self: start;
}

.font-color {
  width: 16px;
  font-size: 15px;
  font-weight: bold;
  line-height: 14px;
  border-bottom: 4px solid #f00;
}

.shaded {
  width: 14px;
  height: 14px;
  line-height: 14px;
  font-weight: bold;
  background: #b1b1b1;
}

.circled {
  width: 16px;
  height: 16px;
  line-height: 14px;
  font-size: 10px;
  border: 1px solid #666;
  border-radius: 50%;
}

.ribbon-combo {
  display: flex;
  align-items: center;
  background: #fff;
  border: 1px solid #c6c6c6;
  padding: 0 4px 0 2px;
}

.ribbon-combo input {
  flex: 1;
  min-width: 0;
  margin-right: 4px;
  font-size: 13px;
}

.font-name {
  width: 91px;
}

.font-size {
  width: 47px;
}

.font-size input {
  margin-right: 0;
  font-size: 12px;
}

.gallery {
  flex: 1;
  display: flex;
  height: 60px;
  margin-top: 2px;
  background: #fff;
  border: 1px solid #ababab;
}

.style-item {
  flex: 1;
  min-width: 0;
  padding: 4px 4px 0;
  display: flex;
  flex-direction: column;
  align-items: center;
  color: #666;
}

.style-item.selected {
  border: 4px solid #c5c5c5;
  padding: 0;
}

.sample {
  width: 58px;
  height: 32px;
  line-height: 32px;
  font-size: 20px;
  color: #000;
  overflow: hidden;
  text-align: left;
}

.sample.h1,
.sample.h3 {
  font-family: "Liberation Serif", serif;
  font-weight: bold;
}

.sample.h1 {
  font-size: 27px;
  line-height: 26px;
}

.sample.sub {
  font-weight: 600;
}

.gallery-scroll {
  width: 14px;
  display: flex;
  flex-direction: column;
  border-left: 1px solid #c6c6c6;
}

.gallery-scroll button {
  flex: 1;
  display: flex;
  align-items: center;
  justify-content: center;
}

.gallery-scroll button + button {
  border-top: 1px solid #c6c6c6;
}

/* Quick access */
.quick-access {
  height: 35px;
  flex-shrink: 0;
  display: flex;
  padding-bottom: 1px;
}

.quick-access button {
  width: 53px;
  display: flex;
  align-items: center;
  justify-content: center;
}

.quick-access button:first-child {
  width: 48px;
}

.quick-access .undo {
  gap: 6px;
  padding-left: 14px;
}

/* Navigation pane */
.workspace {
  flex: 1;
  min-height: 0;
  display: flex;
}

.nav-pane {
  width: 270px;
  flex-shrink: 0;
  padding: 14px 20px 0 13px;
  border-right: 1px solid #bbb;
}

.nav-head {
  display: flex;
  align-items: center;
  gap: 8px;
  height: 24px;
  margin-right: -7px;
}

.nav-head h2 {
  flex: 1;
  font-size: 21px;
  color: #2b579a;
}

.nav-search {
  display: flex;
  align-items: center;
  gap: 5px;
  height: 24px;
  margin-top: 9px;
  padding: 0 4px 0 2px;
  background: #fff;
  border: 1px solid #ababab;
  color: #2b579a;
}

.nav-search input {
  flex: 1;
  min-width: 0;
}

.nav-search input::placeholder {
  color: #666;
}

.nav-tabs {
  display: flex;
  margin-top: 16px;
}

.nav-tabs button {
  width: 49px;
  height: 20px;
  border-right: 1px solid #dcdcdc;
}

.nav-tabs button:first-child {
  width: 37px;
  text-align: left;
}

.nav-tabs button:last-child {
  border: none;
}

.nav-tabs .active {
  color: #2b579a;
  font-weight: bold;
}

.nav-top {
  display: flex;
  align-items: center;
  justify-content: center;
  width: 210px;
  height: 17px;
  margin: 11px 0 0 15px;
  background: #fdfdfd;
  border: 1px solid #c6c6c6;
}

.tree li {
  display: flex;
  align-items: center;
  height: 21px;
  padding-left: 5px;
}

.tree a {
  flex: 1;
  max-width: 208px;
  padding-left: 5px;
  line-height: 21px;
  font-size: 13px;
  color: inherit;
  text-decoration: none;
}

.tree .selected a {
  background: #c2d5f2;
}

.tree .level-2 {
  padding-left: 21px;
}

.tree .level-3 {
  padding-left: 48px;
}

.twisty {
  width: 6px;
  height: 6px;
  margin-right: 5px;
  background: #444;
  clip-path: polygon(100% 0, 100% 100%, 0 100%);
}

/* Rulers, number in the middle of each cell */
.v-side {
  width: 21px;
  display: flex;
  flex-direction: column;
}

.tab-stop {
  width: 27px;
  height: 27px;
  flex-shrink: 0;
  background: #fdfdfd;
  border: 4px solid #d6d6d6;
}

.v-ruler {
  flex: 1;
  min-height: 0;
  width: 17px;
  margin: 40px 0 0 4px;
  display: flex;
  flex-direction: column;
  gap: 1px;
}

.v-ruler ol,
.h-ruler ol {
  display: flex;
  font-family: "Liberation Sans", sans-serif;
  font-size: 10px;
}

.v-ruler .margin {
  flex-direction: column;
  height: 98px;
  padding-top: 2px;
  background: #c6c6c6 linear-gradient(#555, #555) 8px 88px / 2px 1px no-repeat;
}

.v-ruler .area {
  flex: 1;
  flex-direction: column;
  padding: 16px 0 2px;
  background:
    linear-gradient(#555, #555) 8px 7px / 2px 1px no-repeat,
    linear-gradient(#555, #555) 6px 16px / 6px 1px no-repeat,
    #fff;
}

.v-ruler li {
  flex: 1;
  display: flex;
  align-items: center;
  justify-content: center;
  writing-mode: vertical-rl;
  transform: rotate(180deg);
  background:
    linear-gradient(#555, #555) 50% 25% / 2px 1px no-repeat,
    linear-gradient(#555, #555) 50% 0 / 6px 1px no-repeat,
    linear-gradient(#555, #555) 50% 75% / 2px 1px no-repeat;
}

.v-ruler .margin li {
  flex: 0 0 38px;
}

.pages {
  flex: 1;
  min-width: 0;
  display: flex;
  flex-direction: column;
  align-items: center;
  padding: 5px 10px 0 0;
}

.h-ruler {
  position: relative;
  width: 793px;
  height: 16px;
  flex-shrink: 0;
  display: flex;
  gap: 2px;
}

.h-ruler ol {
  justify-content: flex-end;
  overflow: hidden;
}

.h-ruler .area {
  flex: 1;
  padding-right: 4px;
  background: #fff;
}

.h-ruler .margin {
  width: 120px;
  background: #c6c6c6;
}

.h-ruler li {
  flex: 0 0 38px;
  text-align: center;
  line-height: 17px;
  background:
    linear-gradient(#555, #555) 9px 8px / 1px 2px no-repeat,
    linear-gradient(#555, #555) 28px 8px / 1px 2px no-repeat,
    linear-gradient(#555, #555) 37px 6px / 1px 6px no-repeat;
}

.h-ruler .end {
  flex-basis: 12px;
}

.indent-marker {
  position: absolute;
  right: 113px;
  top: 8px;
}

.page-end {
  width: 793px;
  height: 24px;
  flex-shrink: 0;
  margin: 9px 0 14px;
  background: #fff;
  border: 1px solid #c6c6c6;
  border-top: none;
}

.page {
  width: 793px;
  flex: 1;
  min-height: 0;
  background: #fff;
  border: 1px solid #c6c6c6;
  border-bottom: none;
  color: #000;
}

.crop-mark {
  width: 24px;
  height: 24px;
  margin: 71px 94px 0 auto;
  border-left: 1px solid #ababab;
  border-bottom: 1px solid #ababab;
}

.body-text {
  display: flex;
  flex-direction: column;
  gap: 20px;
  margin: 240px 128px 0 0;
  font-family: "Noto Sans CJK SC", sans-serif;
  font-size: 16px;
  line-height: 21px;
  text-align: right;
}

.names {
  margin: 96px 0 0 195px;
  border-collapse: collapse;
  font-family: "Liberation Serif", "Noto Sans CJK SC", serif;
  font-weight: 300;
  font-size: 20px;
  line-height: 28px;
  white-space: nowrap;
}

.names td {
  width: 74px;
  text-align: justify;
  text-align-last: justify;
}

.names td + td {
  width: 173px;
  padding-left: 118px;
}

/* Status bar */
.statusbar {
  height: 15px;
  flex-shrink: 0;
  display: flex;
  gap: 18px;
  overflow: hidden;
  padding-left: 6px;
  line-height: 18px;
  background: #f1f1f1;
  border-top: 1px solid #c6c6c6;
  white-space: nowrap;
}

.statusbar > svg {
  margin-top: 3px;
}

.views {
  display: flex;
  margin-left: auto;
}

.views button {
  width: 38px;
  height: 22px;
  display: flex;
  justify-content: center;
  padding-top: 2px;
}

.views .on {
  background: #c9c9c9;
}

.zoom {
  display: flex;
  gap: 4px;
  height: 20px;
  align-items: center;
  padding-right: 19px;
  margin-left: -14px;
}

.zoom span {
  margin-left: 10px;
}

.zoom input {
  width: 100px;
  height: 20px;
  appearance: none;
  background: linear-gradient(#999, #999) center / 100% 1px no-repeat;
}

.zoom input::-webkit-slider-thumb {
  appearance: none;
  width: 4px;
  height: 10px;
  background: #555;
}

/* Dialog */
.dialog-layer {
  position: absolute;
  top: 161px;
  left: 0;
  right: 0;
  display: flex;
  justify-content: center;
  padding-right: 1px;
}

.dialog {
  width: 552px;
  background: #f0f0f0;
  border: 1px solid #666;
  box-shadow: 0 6px 18px rgba(0, 0, 0, 0.4);
  color: #000;
}

.dialog-title {
  height: 30px;
  display: flex;
  align-items: center;
  padding-left: 8px;
  background: #fff;
}

.dialog-title h2 {
  flex: 1;
  font-size: 12px;
}

.dialog-title button {
  width: 45px;
  display: flex;
  justify-content: center;
  font-size: 14px;
}

.dialog-body {
  padding: 10px 6px;
}

.dialog h3 {
  display: flex;
  align-items: center;
  gap: 5px;
  font-size: 12px;
}

.dialog h3::after {
  content: "";
  flex: 1;
  height: 1px;
  background: #dcdcdc;
}

.fields {
  display: grid;
  grid-template-columns: 99px 1fr;
  grid-auto-rows: 26px;
  row-gap: 5px;
  align-items: center;
  margin: 9px 0 12px 9px;
}

.fields label.disabled {
  color: #838383;
}

.name-input {
  height: 26px;
  padding: 0 2px 2px;
  background: #fff;
  border: 1px solid #ababab;
}

.combo {
  display: flex;
  align-items: center;
  height: 26px;
  background: #fff;
  border: 1px solid #ababab;
  color: #000;
}

.combo select {
  flex: 1;
  min-width: 0;
  height: 100%;
  padding: 0 3px;
  appearance: none;
  opacity: 1;
}

.combo > svg:last-child {
  width: 17px;
  height: 100%;
  padding: 0 3px;
  background: #e1e1e1;
  border: 1px solid #ababab;
  color: #444;
}

.combo.disabled {
  background: #f0f0f0;
  color: #838383;
}

.combo.disabled > svg:last-child {
  background: #ccc;
  border-color: #bfbfbf;
  color: #999;
}

.combo .return {
  margin-left: 10px;
}

.format-row,
.align-row {
  display: flex;
  align-items: center;
  margin-left: 9px;
}

.format-row {
  height: 28px;
  margin-top: 9px;
}

.combo.font {
  width: 105px;
  margin-right: 3px;
}

.combo.size {
  width: 46px;
}

.combo.size select {
  padding-right: 0;
}

.combo.color {
  width: 105px;
  margin-right: 3px;
}

.combo.color select {
  text-align: center;
  text-align-last: center;
}

.combo.script {
  width: 88px;
}

.bar {
  width: 1px;
  height: 28px;
  margin: 0 3px;
  background: #a0a0a0;
}

.fmt {
  width: 24px;
  height: 22px;
  display: flex;
  align-items: center;
  justify-content: center;
  border: 1px solid transparent;
  color: #555;
}

.fmt + .fmt {
  margin-left: 2px;
}

.fmt.on {
  background: #c2dcf3;
  border-color: #90c0ee;
}

.align-row {
  height: 38px;
  margin-top: 11px;
  border-top: 1px solid #dcdcdc;
}

.align-row .fmt + .fmt {
  margin-left: 8px;
}

.align-row .bar {
  margin: 0 9px;
}

.preview {
  height: 200px;
  overflow: hidden;
  margin-left: 9px;
  padding: 10px 54px 0 32px;
  background: #fff;
  border: 1px solid #666;
}

.preview p {
  width: 442px;
  font-size: 10px;
  line-height: 14px;
  color: #b5b5b5;
  word-break: break-all;
}

.preview-heading {
  height: 104px;
  padding-top: 16px;
  font-family: "Liberation Serif", "Noto Sans CJK SC", serif;
  font-size: 24px;
  line-height: 32px;
}

.description {
  display: flex;
  height: 75px;
  margin: 4px 0 0 9px;
  border: 1px solid #ababab;
  outline: 2px solid #fff;
  outline-offset: -3px;
}

.description-text {
  flex: 1;
  padding: 3px 0 0 130px;
  line-height: 17px;
}

.scrollbar {
  width: 19px;
  display: flex;
  flex-direction: column;
  align-items: center;
  padding: 8px 0;
  border-left: 1px solid #fff;
}

.scrollbar .thumb {
  width: 15px;
  height: 22px;
  margin: 6px 0 auto;
  background: #cdcdcd;
}

.options {
  display: flex;
  flex-direction: column;
  align-items: flex-start;
  gap: 9px;
  margin: 12px 0 0 117px;
}

.options label {
  display: flex;
  align-items: center;
  gap: 6px;
}

.dialog-buttons {
  display: flex;
  gap: 10px;
  margin-top: 17px;
}

.format-menu-wrap {
  position: relative;
  flex: 1;
}

.format-button {
  display: flex;
  align-items: center;
  gap: 4px;
  height: 29px;
  padding: 0 10px 0 8px;
  background: #cce4f7;
  border: 1px solid #005499;
}

.format-button .caret {
  border-width: 4px;
  border-top-color: #000;
  border-bottom: none;
}

.plain {
  width: 74px;
  height: 29px;
  background: #e1e1e1;
  border: 1px solid #adadad;
}

.menu {
  position: absolute;
  left: 0;
  bottom: 100%;
  width: 151px;
  display: flex;
  flex-direction: column;
  background: #fff;
  border: 1px solid #c6c6c6;
  color: #444;
}

.menu button {
  height: 24px;
  margin: 0 1px;
  padding: 1px 0 0 34px;
  text-align: left;
  border: 1px solid transparent;
}

.menu .hover {
  background: #d5e1f2;
  border-color: #a3bde3;
}

.pointer {
  position: absolute;
  left: 101px;
  top: -180px;
}

.arrow {
  position: absolute;
  filter: drop-shadow(2px 3px 2px rgba(0, 0, 0, 0.5));
}

.arrow-item {
  left: -52px;
  top: -181px;
}

.arrow-button {
  left: -84px;
  top: 25px;
}

/* Watermark */
.watermark {
  position: absolute;
  right: 10px;
  bottom: 8px;
  display: flex;
}

.watermark-text {
  display: flex;
  flex-direction: column;
  color: #5f9bd3;
}

.watermark-text strong {
  font-size: 21px;
  line-height: 26px;
}

.watermark-text span {
  font-size: 15px;
  font-weight: bold;
  line-height: 18px;
  color: #58b368;
}

.watermark-over {
  position: absolute;
  right: -5px;
  bottom: -4px;
  font-size: 21px;
  line-height: 28px;
  color: #999;
  text-shadow: 0 0 2px #fff;
}
```
